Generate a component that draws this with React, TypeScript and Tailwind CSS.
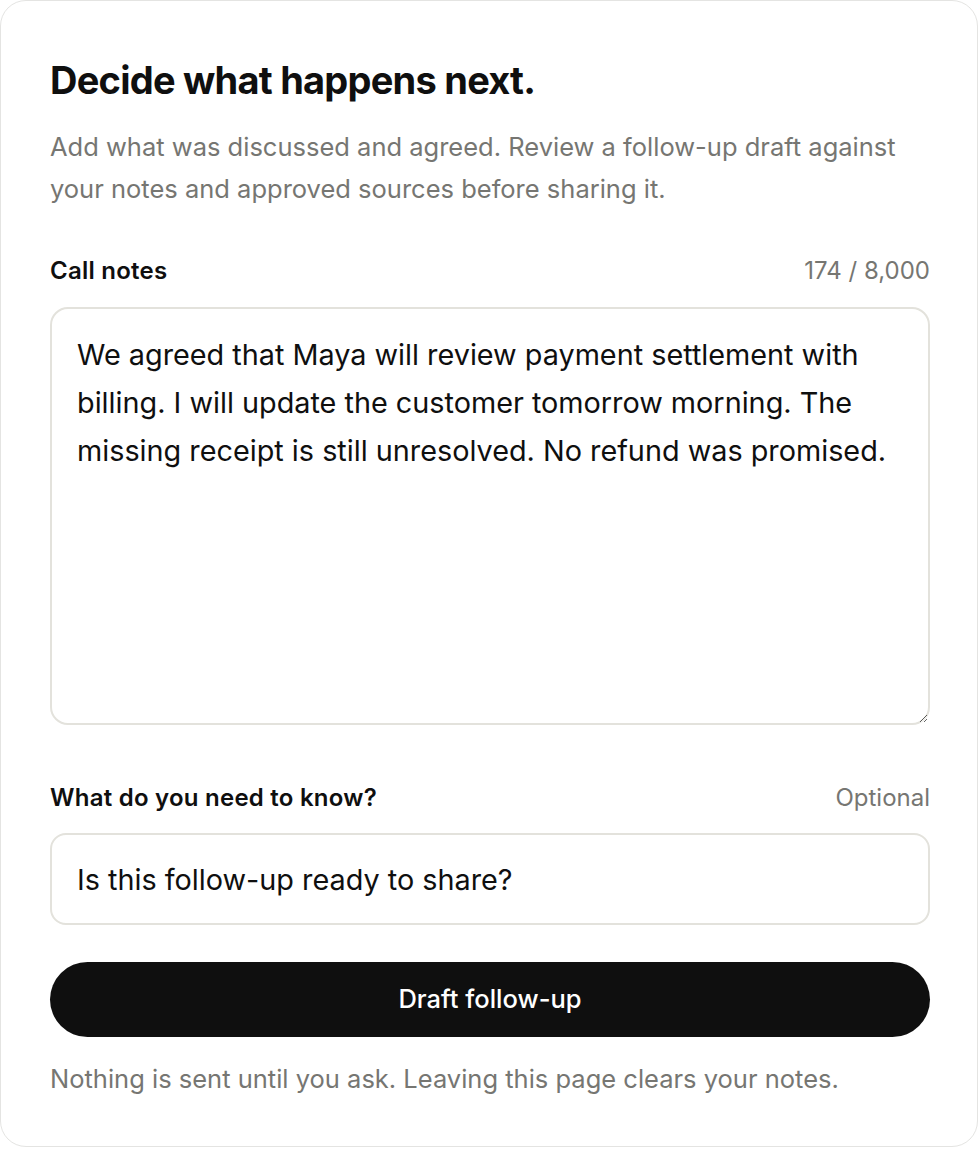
import { useState } from 'react';

export default function App() {
  const [notes, setNotes] = useState(
    'We agreed that Maya will review payment settlement with billing. I will update the customer tomorrow morning. The missing receipt is still unresolved. No refund was promised.'
  );
  const [question, setQuestion] = useState('Is this follow-up ready to share?');

  return (
    <div className="min-h-[1150px] bg-white font-['Inter',sans-serif] text-[#0f0f0f]">
      <div className="w-[978px] h-[1147px] rounded-[26px] border border-[#e4e4e2] bg-white pl-[49px] pr-[47px] pt-[56px]">
        <h1 className="text-[38px] font-bold leading-[46px] tracking-[-0.02em]">Decide what happens next.</h1>
        <p className="mt-[23px] text-[25.5px] leading-[42px] text-[#767672]">
          Add what was discussed and agreed. Review a follow-up draft against your notes and approved sources before sharing it.
        </p>

        <div className="mt-[45px] flex items-center justify-between">
          <label className="text-[24px] font-semibold leading-[32px] tracking-[0.01em]">Call notes</label>
          <span className="text-[24px] leading-[32px] text-[#767672]">{notes.length} / 8,000</span>
        </div>
        <textarea
          value={notes}
          onChange={(e) => setNotes(e.target.value)}
          className="mt-[20px] block h-[418px] w-full resize-y rounded-[18px] border-2 border-[#e3e2dc] px-[25px] py-[22px] text-[28.8px] leading-[48px] text-[#0f0f0f] outline-none"
        />

        <div className="mt-[57px] flex items-center justify-between">
          <label className="text-[24px] font-semibold leading-[32px] tracking-[0.01em]">What do you need to know?</label>
          <span className="text-[24px] leading-[32px] text-[#767672]">Optional</span>
        </div>
        <input
          value={question}
          onChange={(e) => setQuestion(e.target.value)}
          className="mt-[19px] block h-[92px] w-full rounded-[16px] border-2 border-[#e3e2dc] px-[25px] text-[28.8px] text-[#0f0f0f] outline-none"
        />

        <button className="mt-[37px] flex h-[75px] w-full items-center justify-center rounded-full bg-[#0f0f0f] text-[25.5px] font-medium text-white">
          Draft follow-up
        </button>

        <p className="mt-[25px] text-[25.5px] leading-[34px] text-[#767672]">
          Nothing is sent until you ask. Leaving this page clears your notes.
        </p>
      </div>
    </div>
  );
}
